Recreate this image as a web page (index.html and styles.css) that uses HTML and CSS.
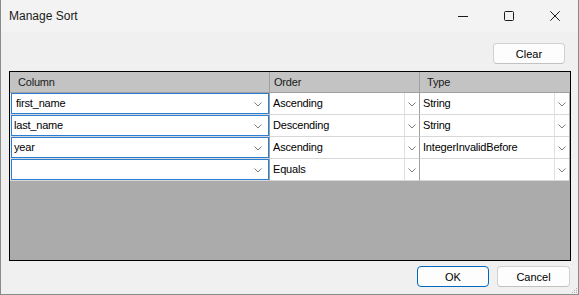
FILE: index.html
```html
<!DOCTYPE html>
<html lang="en">
<head>
  <meta charset="UTF-8" />
  <title>Manage Sort</title>
  <link rel="stylesheet" href="styles.css">
</head>
<body>
  <div class="window">
    <div class="titlebar">
      <span class="title">Manage Sort</span>
      <div class="caption">
        <span class="cap-btn">
          <svg width="10" height="10" viewBox="0 0 10 10"><line x1="0" y1="5.5" x2="10" y2="5.5" stroke="#1a1a1a" stroke-width="1"/></svg>
        </span>
        <span class="cap-btn">
          <svg width="10" height="10" viewBox="0 0 10 10"><rect x="0.5" y="0.5" width="9" height="9" rx="1" fill="none" stroke="#1a1a1a" stroke-width="1"/></svg>
        </span>
        <span class="cap-btn">
          <svg width="10" height="10" viewBox="0 0 10 10"><path d="M0.3 0.3 L9.7 9.7 M9.7 0.3 L0.3 9.7" stroke="#1a1a1a" stroke-width="1"/></svg>
        </span>
      </div>
    </div>

    <div class="client">
      <div class="toolbar">
        <button class="btn">Clear</button>
      </div>

      <div class="grid">
        <div class="grid-head">
          <div class="hcell col-name">Column</div>
          <div class="hcell col-order">Order</div>
          <div class="hcell col-type">Type</div>
        </div>

        <div class="grid-row">
          <div class="cell col-name"><div class="combo editing"><span class="val">first_name</span><svg class="chev" width="8" height="5" viewBox="0 0 8 5"><polyline points="0.5,0.5 4,4 7.5,0.5" fill="none" stroke="#7a7a7a"/></svg></div></div>
          <div class="cell col-order"><div class="drop"><span class="val">Ascending</span><span class="drop-btn"><svg width="8" height="5" viewBox="0 0 8 5"><polyline points="0.5,0.5 4,4 7.5,0.5" fill="none" stroke="#7a7a7a"/></svg></span></div></div>
          <div class="cell col-type"><div class="drop"><span class="val">String</span><span class="drop-btn"><svg width="8" height="5" viewBox="0 0 8 5"><polyline points="0.5,0.5 4,4 7.5,0.5" fill="none" stroke="#7a7a7a"/></svg></span></div></div>
        </div>

        <div class="grid-row">
          <div class="cell col-name"><div class="combo"><span class="val">last_name</span><svg class="chev" width="8" height="5" viewBox="0 0 8 5"><polyline points="0.5,0.5 4,4 7.5,0.5" fill="none" stroke="#7a7a7a"/></svg></div></div>
          <div class="cell col-order"><div class="drop"><span class="val">Descending</span><span class="drop-btn"><svg width="8" height="5" viewBox="0 0 8 5"><polyline points="0.5,0.5 4,4 7.5,0.5" fill="none" stroke="#7a7a7a"/></svg></span></div></div>
          <div class="cell col-type"><div class="drop"><span class="val">String</span><span class="drop-btn"><svg width="8" height="5" viewBox="0 0 8 5"><polyline points="0.5,0.5 4,4 7.5,0.5" fill="none" stroke="#7a7a7a"/></svg></span></div></div>
        </div>

        <div class="grid-row">
          <div class="cell col-name"><div class="combo"><span class="val">year</span><svg class="chev" width="8" height="5" viewBox="0 0 8 5"><polyline points="0.5,0.5 4,4 7.5,0.5" fill="none" stroke="#7a7a7a"/></svg></div></div>
          <div class="cell col-order"><div class="drop"><span class="val">Ascending</span><span class="drop-btn"><svg width="8" height="5" viewBox="0 0 8 5"><polyline points="0.5,0.5 4,4 7.5,0.5" fill="none" stroke="#7a7a7a"/></svg></span></div></div>
          <div class="cell col-type"><div class="drop"><span class="val">IntegerInvalidBefore</span><span class="drop-btn"><svg width="8" height="5" viewBox="0 0 8 5"><polyline points="0.5,0.5 4,4 7.5,0.5" fill="none" stroke="#7a7a7a"/></svg></span></div></div>
        </div>

        <div class="grid-row">
          <div class="cell col-name"><div class="combo"><span class="val"></span><svg class="chev" width="8" height="5" viewBox="0 0 8 5"><polyline points="0.5,0.5 4,4 7.5,0.5" fill="none" stroke="#7a7a7a"/></svg></div></div>
          <div class="cell col-order"><div class="drop"><span class="val">Equals</span><span class="drop-btn"><svg width="8" height="5" viewBox="0 0 8 5"><polyline points="0.5,0.5 4,4 7.5,0.5" fill="none" stroke="#7a7a7a"/></svg></span></div></div>
          <div class="cell col-type"><div class="drop"><span class="val"></span><span class="drop-btn"><svg width="8" height="5" viewBox="0 0 8 5"><polyline points="0.5,0.5 4,4 7.5,0.5" fill="none" stroke="#7a7a7a"/></svg></span></div></div>
        </div>
      </div>

      <div class="footer">
        <button class="btn primary">OK</button>
        <button class="btn">Cancel</button>
      </div>
    </div>

    <svg class="grip" width="7" height="7" viewBox="0 0 7 7">
      <rect x="5" y="1" width="1" height="1" fill="#b0b0b0"/>
      <rect x="3" y="3" width="1" height="1" fill="#b0b0b0"/>
      <rect x="5" y="3" width="1" height="1" fill="#b0b0b0"/>
      <rect x="1" y="5" width="1" height="1" fill="#b0b0b0"/>
      <rect x="3" y="5" width="1" height="1" fill="#b0b0b0"/>
      <rect x="5" y="5" width="1" height="1" fill="#b0b0b0"/>
    </svg>
  </div>
</body>
</html>
```

FILE: styles.css
```css
html, body {
  margin: 0;
  padding: 0;
  background: #f0f0f0;
}
body {
  font-family: "Liberation Sans", Arial, sans-serif;
  color: #000;
}
.window {
  position: relative;
  width: 579px;
  height: 295px;
  box-sizing: border-box;
  border: 1px solid #8a8a8a;
  border-top: none;
  background: #f0f0f0;
  display: flex;
  flex-direction: column;
}
.titlebar {
  height: 32px;
  flex: none;
  display: flex;
  align-items: center;
  background: #f3f3f3;
}
.title {
  font-size: 12px;
  padding-left: 8px;
  color: #1a1a1a;
  flex: 1;
}
.caption {
  display: flex;
  height: 32px;
  align-self: flex-start;
}
.cap-btn {
  width: 46px;
  height: 32px;
  display: flex;
  align-items: center;
  justify-content: center;
}
.cap-btn svg {
  display: block;
}
.client {
  flex: 1;
  display: flex;
  flex-direction: column;
}
.toolbar {
  display: flex;
  justify-content: flex-end;
  margin-top: 11px;
  margin-right: 13px;
}
.btn {
  font-family: "Liberation Sans", Arial, sans-serif;
  font-size: 11px;
  color: #000;
  width: 72px;
  height: 21px;
  padding: 0;
  background: #fdfdfd;
  border: 1px solid #d0d0d0;
  border-bottom-color: #c2c2c2;
  border-radius: 4px;
  box-sizing: border-box;
}
.btn.primary {
  border: 1px solid #0067c0;
  box-shadow: inset 0 0 0 0 #0067c0;
}
.footer .btn:last-child {
  width: 73px;
}

/* data grid */
.grid {
  margin: 7px 7px 0 8px;
  height: 190px;
  box-sizing: border-box;
  border: 1px solid #000;
  background: #ababab;
  font-size: 11px;
  letter-spacing: -0.2px;
}
.grid-head {
  display: flex;
  height: 21px;
  box-sizing: border-box;
  background: #c3c3c3;
  border-bottom: 1px solid #a0a0a0;
}
.hcell {
  box-sizing: border-box;
  border-right: 1px solid #a0a0a0;
  line-height: 20px;
  padding-left: 8px;
  color: #1a1a1a;
}
.col-name { width: 260px; }
.col-order { width: 150px; }
.col-type { width: 150px; }
.hcell.col-type { border-right: none; padding-left: 7px; }
.hcell.col-order { padding-left: 4px; }

.grid-row {
  display: flex;
  height: 22px;
}
.cell {
  box-sizing: border-box;
  background: #fff;
  border-right: 1px solid #a0a0a0;
  border-bottom: 1px solid #d8d8d8;
}
.cell.col-name {
  background: #f0f0f0;
  padding: 0 0 0 1px;
}
.cell.col-type {
  width: 149px;
  border-right: none;
  margin-right: 1px;
}
.combo {
  box-sizing: border-box;
  height: 21px;
  width: 258px;
  border: 1px solid #2a7fd4;
  background: #fff;
  display: flex;
  align-items: center;
  padding-left: 2px;
}
.combo.editing {
  padding-left: 4px;
}
.val {
  flex: 1;
  white-space: nowrap;
  overflow: hidden;
  line-height: 19px;
}
.chev {
  display: block;
  margin-right: 6px;
  margin-top: 1px;
}
.drop {
  height: 21px;
  display: flex;
  align-items: center;
  padding-left: 3px;
}
.drop-btn {
  width: 15px;
  height: 21px;
  box-sizing: border-box;
  border-left: 1px solid #e0e0e0;
  display: flex;
  align-items: center;
  justify-content: center;
}
.drop-btn svg {
  display: block;
  margin-top: 1px;
}

.footer {
  display: flex;
  justify-content: flex-end;
  gap: 8px;
  margin-top: 5px;
  margin-right: 8px;
}
.grip {
  position: absolute;
  right: 0;
  bottom: 0;
  display: block;
}
```
